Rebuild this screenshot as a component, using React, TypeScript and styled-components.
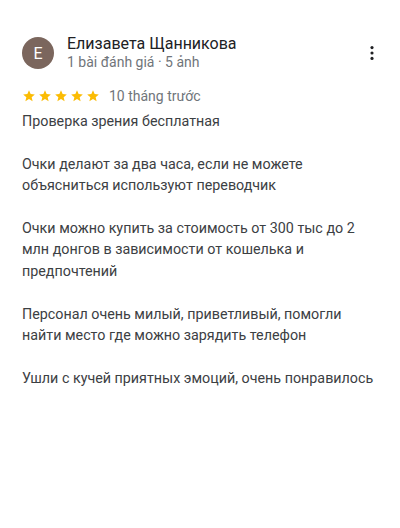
import React from "react";
import styled, { createGlobalStyle } from "styled-components";

const GlobalStyle = createGlobalStyle`
  html, body {
    margin: 0;
    padding: 0;
    background: #ffffff;
  }
  body {
    font-family: Roboto, "Noto Sans", Arial, sans-serif;
    -webkit-font-smoothing: antialiased;
  }
`;

const Card = styled.article`
  box-sizing: border-box;
  width: 400px;
  min-height: 528px;
  padding: 35px 20px 0 22px;
  background: #ffffff;
`;

const Header = styled.header`
  display: flex;
  align-items: center;
  gap: 13px;
`;

const Avatar = styled.div`
  flex: none;
  width: 32px;
  height: 32px;
  border-radius: 50%;
  background: #7b665d;
  color: #ffffff;
  display: flex;
  align-items: center;
  justify-content: center;
  font-size: 16px;
  font-weight: 400;
`;

const Author = styled.div`
  flex: 1;
  display: flex;
  flex-direction: column;
`;

const Name = styled.div`
  font-size: 16px;
  line-height: 18px;
  color: #202124;
`;

const Meta = styled.div`
  font-size: 14px;
  line-height: 18px;
  color: #70757a;
`;

const MenuButton = styled.button`
  flex: none;
  width: 24px;
  height: 24px;
  margin-right: -4px;
  padding: 0;
  border: 0;
  background: transparent;
  display: flex;
  align-items: center;
  justify-content: center;
  color: #202124;
`;

const RatingRow = styled.div`
  display: flex;
  align-items: center;
  gap: 9px;
  margin-top: 15px;
  height: 20px;
`;

const Stars = styled.div`
  display: flex;
  gap: 2px;
`;

const When = styled.span`
  font-size: 14px;
  line-height: 20px;
  color: #70757a;
`;

const Body = styled.p`
  margin: 5px 0 0 0;
  font-size: 14.3px;
  line-height: 21.4px;
  color: #3c4043;
  white-space: pre-line;
`;

const Star = () => (
  <svg width="14" height="14" viewBox="0 0 24 24" aria-hidden="true">
    <path
      fill="#fbbc04"
      d="M12 17.27 18.18 21l-1.64-7.03L22 9.24l-7.19-.61L12 2 9.19 8.63 2 9.24l5.46 4.73L5.82 21z"
    />
  </svg>
);

const MoreIcon = () => (
  <svg width="20" height="20" viewBox="0 0 24 24" aria-hidden="true">
    <circle cx="12" cy="5.5" r="1.9" fill="currentColor" />
    <circle cx="12" cy="12" r="1.9" fill="currentColor" />
    <circle cx="12" cy="18.5" r="1.9" fill="currentColor" />
  </svg>
);

const review = `Проверка зрения бесплатная

Очки делают за два часа, если не можете объясниться используют переводчик

Очки можно купить за стоимость от 300 тыс до 2 млн донгов в зависимости от кошелька и предпочтений

Персонал очень милый, приветливый, помогли найти место где можно зарядить телефон

Ушли с кучей приятных эмоций, очень понравилось`;

export default function App() {
  return (
    <>
      <GlobalStyle />
      <Card>
        <Header>
          <Avatar>E</Avatar>
          <Author>
            <Name>Елизавета Щанникова</Name>
            <Meta>1 bài đánh giá · 5 ảnh</Meta>
          </Author>
          <MenuButton aria-label="Thêm">
            <MoreIcon />
          </MenuButton>
        </Header>
        <RatingRow>
          <Stars>
            {[0, 1, 2, 3, 4].map((i) => (
              <Star key={i} />
            ))}
          </Stars>
          <When>10 tháng trước</When>
        </RatingRow>
        <Body>{review}</Body>
      </Card>
    </>
  );
}
